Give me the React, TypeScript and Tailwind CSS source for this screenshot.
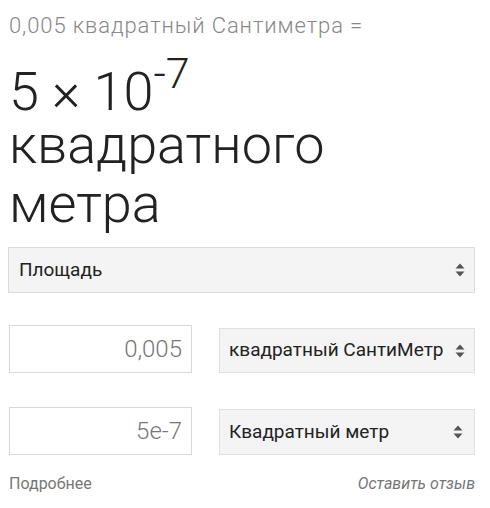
import React from "react";

function Arrows() {
  return (
    <svg width="12" height="16" viewBox="0 0 12 16" className="shrink-0">
      <path d="M1.5 6.5 L6 1.5 L10.5 6.5 Z" fill="#555" />
      <path d="M1.5 9.5 L6 14.5 L10.5 9.5 Z" fill="#555" />
    </svg>
  );
}

export default function App() {
  return (
    <div
      className="w-[490px] h-[508px] bg-white overflow-hidden"
      style={{ fontFamily: "Roboto, 'Noto Sans', sans-serif" }}
    >
      <div className="pl-[9px] pr-[15px] pt-[12px]">
        <div className="text-[22px] leading-[28px] tracking-[0.9px] text-[#888] font-light">
          0,005 квадратный Сантиметра =
        </div>
        <div className="text-[54px] text-[#222] font-light mt-[12px]">
          <div className="leading-[59px] h-[59px] mb-[4px] whitespace-nowrap">
            5 × 10
            <span className="text-[43px] leading-none align-[22px]">-7</span>
          </div>
          <div className="leading-[59px]">квадратного</div>
          <div className="leading-[59px]">метра</div>
        </div>
        <div className="mt-[14px] h-[46px] w-[467px] -ml-[1px] bg-[#f4f4f4] border border-[#dcdcdc] flex items-center justify-between pl-[10px] pr-[8px] text-[19px] text-[#222]">
          <span>Площадь</span>
          <Arrows />
        </div>
        <div className="mt-[32px] flex items-start justify-between w-[466px]">
          <div className="w-[183px] h-[48px] border border-[#d9d9d9] bg-white flex items-center justify-end pr-[9px] text-[24px] font-light text-[#777]">
            0,005
          </div>
          <div className="mt-[3px] w-[256px] h-[45px] bg-[#f4f4f4] border border-[#e0e0e0] flex items-center justify-between pl-[9px] pr-[8px] text-[19px] text-[#222]">
            <span>квадратный СантиМетр</span>
            <Arrows />
          </div>
        </div>
        <div className="mt-[34px] flex items-start justify-between w-[466px]">
          <div className="w-[183px] h-[48px] border border-[#d9d9d9] bg-white flex items-center justify-end pr-[9px] text-[24px] font-light text-[#777]">
            5e-7
          </div>
          <div className="mt-[2px] w-[256px] h-[46px] bg-[#f4f4f4] border border-[#e0e0e0] flex items-center justify-between pl-[9px] pr-[10px] text-[19px] text-[#222]">
            <span>Квадратный метр</span>
            <Arrows />
          </div>
        </div>
        <div className="mt-[17px] flex justify-between w-[466px] text-[16px] text-[#777]">
          <span>Подробнее</span>
          <span className="italic">Оставить отзыв</span>
        </div>
      </div>
    </div>
  );
}
